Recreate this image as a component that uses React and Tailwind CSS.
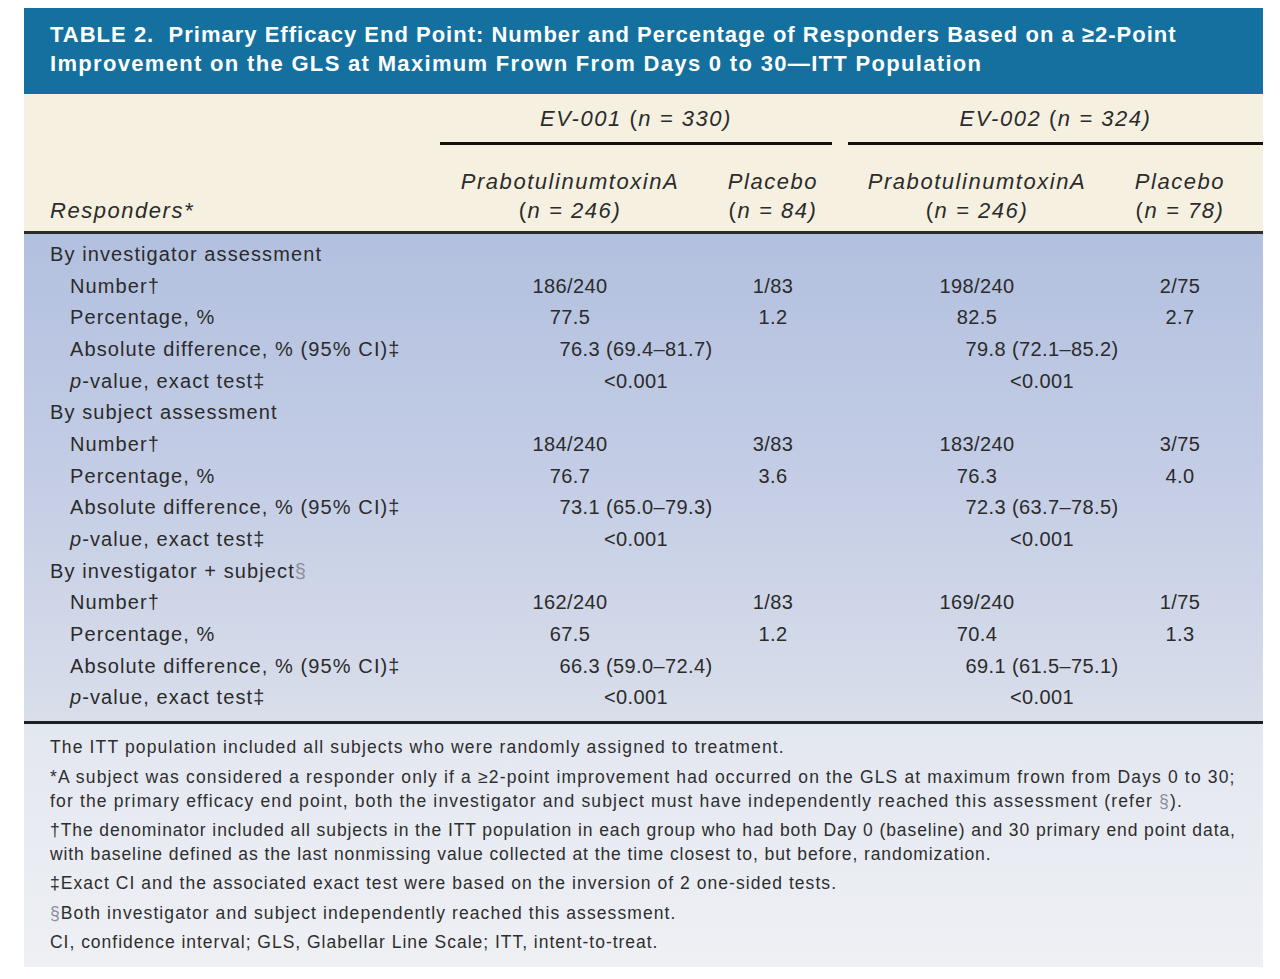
import React from "react";

const sections = [
  {
    title: "By investigator assessment",
    rows: [
      { label: "Number†", v: ["186/240", "1/83", "198/240", "2/75"] },
      { label: "Percentage, %", v: ["77.5", "1.2", "82.5", "2.7"] },
      { label: "Absolute difference, % (95% CI)‡", s: ["76.3 (69.4–81.7)", "79.8 (72.1–85.2)"] },
      { label: "p", p: true, s: ["<0.001", "<0.001"] },
    ],
  },
  {
    title: "By subject assessment",
    rows: [
      { label: "Number†", v: ["184/240", "3/83", "183/240", "3/75"] },
      { label: "Percentage, %", v: ["76.7", "3.6", "76.3", "4.0"] },
      { label: "Absolute difference, % (95% CI)‡", s: ["73.1 (65.0–79.3)", "72.3 (63.7–78.5)"] },
      { label: "p", p: true, s: ["<0.001", "<0.001"] },
    ],
  },
  {
    title: "By investigator + subject",
    sect: true,
    rows: [
      { label: "Number†", v: ["162/240", "1/83", "169/240", "1/75"] },
      { label: "Percentage, %", v: ["67.5", "1.2", "70.4", "1.3"] },
      { label: "Absolute difference, % (95% CI)‡", s: ["66.3 (59.0–72.4)", "69.1 (61.5–75.1)"] },
      { label: "p", p: true, s: ["<0.001", "<0.001"] },
    ],
  },
];

const grid = "grid grid-cols-[416px_260px_146px_262px_155px]";

function Label({ row }) {
  if (row.p) {
    return (
      <span>
        <span className="italic">p</span>-value, exact test‡
      </span>
    );
  }
  return <span>{row.label}</span>;
}

export default function App() {
  return (
    <div
      className="min-h-[979px] bg-white pt-[8px] pl-[24px] text-[#2b2b2b]"
      style={{ fontFamily: '"Liberation Sans", Arial, sans-serif' }}
    >
      <div className="w-[1239px]">
        {/* Title */}
        <div className="bg-[#13709f] pl-[26px] pt-[12px] pb-[16px] text-[22px] font-bold leading-[29px] tracking-[0.046em] text-white">
          <div className="whitespace-nowrap">TABLE 2.&nbsp; Primary Efficacy End Point: Number and Percentage of Responders Based on a ≥2-Point</div>
          <div className="whitespace-nowrap tracking-[0.06em]">Improvement on the GLS at Maximum Frown From Days 0 to 30—ITT Population</div>
        </div>

        {/* Column headers */}
        <div className="border-b-[3px] border-[#2a2a2a] bg-[#f6f0e1] pb-[6px] text-[22px] italic leading-[29px] tracking-[0.07em]">
          <div className={grid}>
            <div />
            <div className="col-span-2 pr-[14px]">
              <div className="border-b-[3px] border-[#111] pt-[10px] pb-[9px] text-center">
                EV-001 <span className="not-italic">(</span>n = 330)
              </div>
            </div>
            <div className="col-span-2 pl-[2px]">
              <div className="border-b-[3px] border-[#111] pt-[10px] pb-[9px] text-center">
                EV-002 <span className="not-italic">(</span>n = 324)
              </div>
            </div>
          </div>
          <div className={grid + " pt-[22px]"}>
            <div className="self-end pl-[26px]">Responders*</div>
            <div className="text-center">
              <div>PrabotulinumtoxinA</div>
              <div><span className="not-italic">(</span>n = 246)</div>
            </div>
            <div className="text-center">
              <div>Placebo</div>
              <div><span className="not-italic">(</span>n = 84)</div>
            </div>
            <div className="text-center">
              <div>PrabotulinumtoxinA</div>
              <div><span className="not-italic">(</span>n = 246)</div>
            </div>
            <div className="pr-[11px] text-center">
              <div>Placebo</div>
              <div><span className="not-italic">(</span>n = 78)</div>
            </div>
          </div>
        </div>

        {/* Body */}
        <div className="border-b-[3px] border-[#1f1f22] bg-gradient-to-b from-[#b2c0df] via-[#c4cde5] to-[#d9deea] pt-[4px] pb-[8px] text-[20px] tracking-[0.055em]">
          {sections.map((sec) => (
            <React.Fragment key={sec.title}>
              <div className={grid + " h-[31.7px] items-center"}>
                <div className="whitespace-nowrap pl-[26px]">
                  {sec.title}
                  {sec.sect && <span className="text-[#8a8f9c]">§</span>}
                </div>
              </div>
              {sec.rows.map((row, i) => (
                <div key={i} className={grid + " h-[31.7px] items-center"}>
                  <div className="whitespace-nowrap pl-[46px]">
                    <Label row={row} />
                  </div>
                  {row.v ? (
                    <>
                      <div className="text-center tracking-[0.02em]">{row.v[0]}</div>
                      <div className="text-center tracking-[0.02em]">{row.v[1]}</div>
                      <div className="text-center tracking-[0.02em]">{row.v[2]}</div>
                      <div className="pr-[11px] text-center tracking-[0.02em]">{row.v[3]}</div>
                    </>
                  ) : (
                    <>
                      <div className="col-span-2 pr-[14px] text-center tracking-[0.02em]">{row.s[0]}</div>
                      <div className="col-span-2 pr-[25px] text-center tracking-[0.02em]">{row.s[1]}</div>
                    </>
                  )}
                </div>
              ))}
            </React.Fragment>
          ))}
        </div>

        {/* Footnotes */}
        <div className="flex flex-col gap-[5.4px] bg-gradient-to-b from-[#e3e7f0] to-[#eef0f4] pl-[26px] pt-[11px] pb-[13px] text-[17.5px] leading-[24px] tracking-[0.066em] text-[#2e2e2e]">
          <p className="whitespace-nowrap tracking-[0.065em]">The ITT population included all subjects who were randomly assigned to treatment.</p>
          <p className="whitespace-nowrap">
            *A subject was considered a responder only if a ≥2-point improvement had occurred on the GLS at maximum frown from Days 0 to 30;
            <br />
            for the primary efficacy end point, both the investigator and subject must have independently reached this assessment (refer{" "}
            <span className="text-[#8a8f9c]">§</span>).
          </p>
          <p className="whitespace-nowrap tracking-[0.052em]">
            †The denominator included all subjects in the ITT population in each group who had both Day 0 (baseline) and 30 primary end point data,
            <br />
            with baseline defined as the last nonmissing value collected at the time closest to, but before, randomization.
          </p>
          <p className="whitespace-nowrap tracking-[0.06em]">‡Exact CI and the associated exact test were based on the inversion of 2 one-sided tests.</p>
          <p className="whitespace-nowrap tracking-[0.062em]">
            <span className="text-[#8a8f9c]">§</span>Both investigator and subject independently reached this assessment.
          </p>
          <p className="whitespace-nowrap tracking-[0.056em]">CI, confidence interval; GLS, Glabellar Line Scale; ITT, intent-to-treat.</p>
        </div>
      </div>
    </div>
  );
}
